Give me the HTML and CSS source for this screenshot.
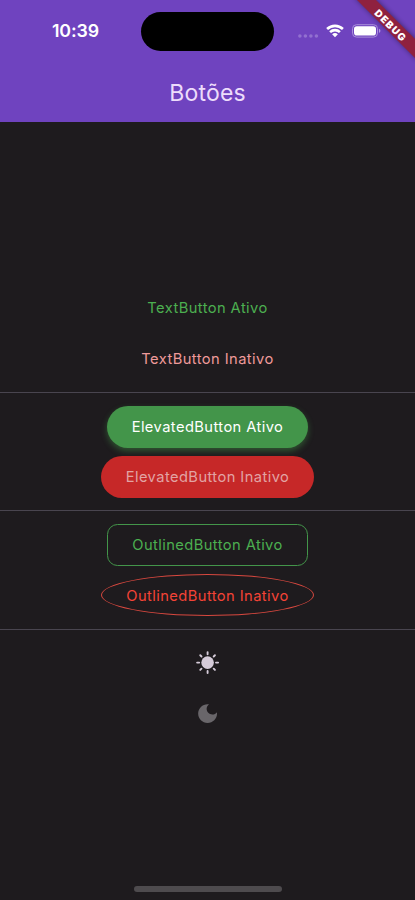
FILE: index.html
```html
<!DOCTYPE html>
<html lang="pt-BR">
<head>
<meta charset="utf-8">
<meta name="viewport" content="width=device-width, initial-scale=1">
<title>Botões</title>
<link rel="stylesheet" href="styles.css">
</head>
<body>
<div class="screen">
  <header class="app-bar">
    <div class="status-bar">
      <div class="time">10:39</div>
      <div class="island"></div>
      <div class="indicators">
        <svg class="signal" width="22" height="6" viewBox="0 0 22 6"><circle cx="2.9" cy="3" r="1.8"/><circle cx="8.400" cy="3" r="1.8"/><circle cx="13.900" cy="3" r="1.8"/><circle cx="19.400" cy="3" r="1.8"/></svg>
        <svg class="wifi" width="18" height="14" viewBox="0 0 18 14"><path d="M.2 4.1a12.6 12.6 0 0 1 17.6 0l-1.8 2a10 10 0 0 0-14 0zM3.2 7.2a8.3 8.3 0 0 1 11.6 0l-1.8 1.9a5.8 5.8 0 0 0-8 0zM6.1 10.3a4.2 4.2 0 0 1 5.8 0L9 13.3z"/></svg>
        <svg class="battery" width="29" height="14" viewBox="0 0 29 14"><rect class="shell" x=".5" y=".7" width="25" height="12.4" rx="4"/><rect x="2" y="2.2" width="22" height="9.4" rx="2.8"/><path class="cap" d="M27 4.8c1.9.7 1.9 3.5 0 4.200z"/></svg>
      </div>
    </div>
    <h1 class="title">Botões</h1>
  </header>
  <svg class="debug" width="70" height="70" viewBox="0 0 70 70">
    <defs><filter id="soft" x="-20%" y="-20%" width="140%" height="140%"><feGaussianBlur stdDeviation="2.5"/></filter></defs>
    <path class="debug-shadow" filter="url(#soft)" d="M9-3L73 61V41L29-3z"/>
    <path class="debug-band" d="M9-3L73 61V42L28-3z"/>
    <text transform="translate(45.800 25.500) rotate(45)" x="0" y="3.800" text-anchor="middle">DEBUG</text>
  </svg>
  <main class="content">
    <div class="row"><button class="btn text-active"><span>TextButton Ativo</span></button></div>
    <div class="row"><button class="btn text-inactive"><span>TextButton Inativo</span></button></div>
    <div class="divider"></div>
    <div class="row"><button class="btn elevated-active"><span>ElevatedButton Ativo</span></button></div>
    <div class="row"><button class="btn elevated-inactive"><span>ElevatedButton Inativo</span></button></div>
    <div class="divider"></div>
    <div class="row"><button class="btn outlined-active"><span>OutlinedButton Ativo</span></button></div>
    <div class="row"><button class="btn outlined-inactive"><span>OutlinedButton Inativo</span></button></div>
    <div class="divider"></div>
    <div class="row"><svg class="sun" width="25.200" height="25.200" viewBox="0 0 24 24"><circle cx="12" cy="12" r="6"/><path d="M12 2v2M12 20v2M2 12h2M20 12h2M5 5l1.200 1.200M17.800 17.800L19 19M5 19l1.200-1.200M17.800 6.200L19 5"/></svg></div>
    <div class="row"><svg class="moon" width="25.200" height="25.200" viewBox="0 0 24 24"><path d="M12 3c-4.970 0-9 4.030-9 9s4.030 9 9 9 9-4.030 9-9c0-.46-.04-.92-.1-1.360-.98 1.370-2.580 2.260-4.400 2.260-2.980 0-5.400-2.420-5.400-5.400 0-1.810.89-3.420 2.260-4.400-.44-.06-.9-.1-1.360-.1z"/></svg></div>
  </main>
  <div class="home-indicator"></div>
</div>
</body>
</html>
```
FILE: styles.css
```css
* { box-sizing: border-box; }
body { margin: 0; background: #1e1b1e; font-family: Inter, sans-serif; }
.screen {
  position: relative;
  width: 415px;
  height: 900px;
  overflow: hidden;
  display: flex;
  flex-direction: column;
  background: #1e1b1e;
}
.app-bar { height: 121.500px; flex: none; background: #6f43bf; }
.status-bar {
  height: 62px;
  display: grid;
  grid-template-columns: 141px 133px 141px;
  align-items: center;
}
.time {
  padding: 0 0 1px 10px;
  text-align: center;
  font-size: 17.800px;
  font-weight: 600;
  letter-spacing: -0.1px;
  color: #fff;
}
.island { height: 39px; border-radius: 20px; background: #000; }
.indicators { display: flex; align-items: center; padding-left: 23px; }
.signal { fill: #9270d0; margin-top: 9px; }
.wifi { fill: #fff; margin-left: 7px; }
.battery { fill: #fff; margin-left: 8px; }
.battery .shell { fill: none; stroke: #a98fdb; stroke-width: 1; }
.battery .cap { fill: #b49ce0; }
.title {
  margin: 0;
  height: 59px;
  line-height: 62px;
  text-align: center;
  font-size: 23px;
  font-weight: 400;
  letter-spacing: 0.2px;
  color: #eddcfb;
}
.debug { position: absolute; top: 0; right: 0; }
.debug-shadow { fill: #000; opacity: 0.4; }
.debug-band { fill: #8f213f; }
.debug text {
  font-family: Inter, sans-serif;
  font-size: 10px;
  font-weight: 900;
  letter-spacing: 1.2px;
  fill: #fff;
}
.content { flex: 1; padding-top: 161.800px; }
.row { height: 50.400px; display: flex; align-items: center; justify-content: center; }
.divider { height: 17.400px; display: flex; align-items: center; }
.divider::before { content: ""; width: 100%; height: 1px; background: #49454f; }
.btn {
  height: 42px;
  padding: 0;
  border: 0;
  background: none;
  font-family: Inter, sans-serif;
  font-size: 14.700px;
  font-weight: 400;
  letter-spacing: 0.42px;
  white-space: nowrap;
}
.text-active { color: #4caf50; }
.text-inactive { color: #ef9a9a; }
.elevated-active, .outlined-active { width: 201.500px; }
.elevated-inactive, .outlined-inactive { width: 213px; }
.elevated-active {
  color: #fff;
  background: #43954a;
  border-radius: 21px;
  box-shadow: 0 3px 6px rgba(76, 175, 80, 0.4);
}
.elevated-inactive { color: #e2a3a4; background: #c62828; border-radius: 21px; }
.outlined-active { color: #4caf50; border: 1px solid #43954a; border-radius: 10.500px; }
.outlined-inactive { padding-top: 1px; color: #f44336; border: 1px solid #d8483f; border-radius: 50%; }
.sun { fill: #d5cbd9; stroke: #d5cbd9; stroke-width: 1.800; stroke-linecap: round; }
.sun circle { stroke: none; }
.moon { fill: #69666a; }
.home-indicator {
  position: absolute;
  left: 134px;
  bottom: 8px;
  width: 148px;
  height: 6px;
  border-radius: 3px;
  background: #4e4b4e;
}
```
